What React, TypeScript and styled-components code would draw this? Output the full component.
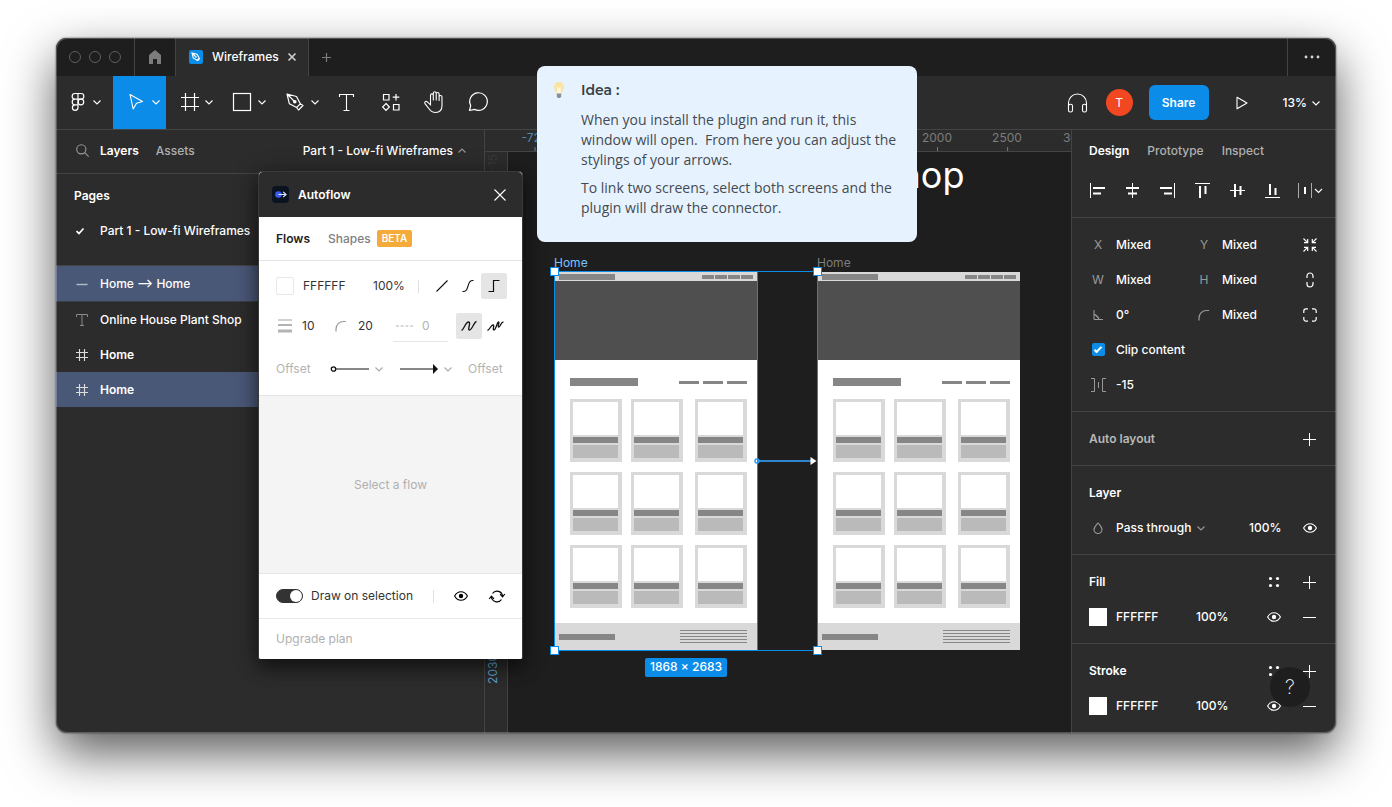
import React from "react";
import styled, { createGlobalStyle, css } from "styled-components";

const GlobalStyle = createGlobalStyle`
  *, *::before, *::after { box-sizing: border-box; }
  body { margin: 0; background: #fff; font-family: Inter, "Liberation Sans", sans-serif; font-size: 12px; line-height: 16px; }
  button, input, select { font: inherit; color: inherit; background: none; border: 0; padding: 0; margin: 0; }
  ul { list-style: none; margin: 0; padding: 0; }
  h1, h2, h3, p { margin: 0; font: inherit; }
`;

const panelBg = "#2c2c2c";
const darkBg = "#1e1e1e";
const line = "#444";
const blue = "#0c8ce9";

/* ---------- icons ---------- */

const Svg = styled.svg`
  display: block;
  flex: none;
  fill: none;
  stroke: currentColor;
  overflow: visible;
`;

type IconProps = { w?: number; h?: number; children: React.ReactNode };
const Icon = ({ w = 20, h = 20, children }: IconProps) => (
  <Svg width={w} height={h} viewBox={`0 0 ${w} ${h}`} aria-hidden="true">
    {children}
  </Svg>
);

const Chevron = ({ up }: { up?: boolean }) => (
  <Icon w={8} h={8}>
    <path d={up ? "M.5 5.500 4 2l3.500 3.500" : "M.5 2.500 4 6l3.500-3.500"} strokeWidth="1.1" />
  </Icon>
);
const HomeIcon = () => (
  <Icon w={14} h={16}>
    <path d="M7 1 1 6v9h4v-5h4v5h4V6Z" fill="currentColor" stroke="none" />
  </Icon>
);
const FileIcon = () => (
  <Icon w={14} h={14}>
    <rect width="14" height="14" rx="2" fill={blue} stroke="none" />
    <path d="m3 3 5 1.200 2.200 4-2 2-4-2.200ZM3 3l3.500 3.500M8.500 10.800l2.300-2.300" stroke="#fff" strokeWidth="1.100" />
    <circle cx="6.800" cy="6.800" r=".9" fill="#fff" stroke="none" />
  </Icon>
);
const CloseIcon = ({ s }: { s: number }) => (
  <Icon w={s} h={s}>
    <path d={`M.5.5 ${s - 0.5} ${s - 0.5}M${s - 0.5}.5.5 ${s - 0.5}`} strokeWidth={s < 10 ? 1.7 : 1.1} />
  </Icon>
);
const PlusIcon = () => (
  <Icon w={14} h={14}>
    <path d="M6.500 1v13M0 7.500h13" />
  </Icon>
);
const SmallPlusIcon = () => (
  <Icon w={9} h={9}>
    <path d="M4.500 0v9M0 4.500h9" strokeWidth="1.200" />
  </Icon>
);
const MinusIcon = () => (
  <Icon w={14} h={14}>
    <path d="M0 7.500h13" />
  </Icon>
);
const FigmaIcon = () => (
  <Icon>
    <path d="M10 1.500H7a2.800 2.800 0 0 0 0 5.700h3Zm0 0h3a2.800 2.800 0 0 1 0 5.700h-3M10 7.200H7a2.800 2.800 0 0 0 0 5.600h3ZM7 12.800a2.800 2.800 0 1 0 3 2.800v-2.800Z" strokeWidth="1.200" />
    <circle cx="12.900" cy="10" r="2.800" strokeWidth="1.200" />
  </Icon>
);
const MoveIcon = () => (
  <Icon>
    <path d="m3 2.500 12.500 7-6 1.700-3.300 5.800Z" strokeWidth="1.100" strokeLinejoin="round" />
  </Icon>
);
const FrameIcon = () => (
  <Icon>
    <path d="M5.500 1v18M14.500 1v18M1 5.500h18M1 14.500h18" strokeWidth="1.200" />
  </Icon>
);
const RectIcon = () => (
  <Icon>
    <rect x=".5" y="1.500" width="17" height="17" strokeWidth="1.200" />
  </Icon>
);
const PenIcon = () => (
  <Icon>
    <path d="m1 2 9.500 2.500 3.800 7.300-3.700 3.700-7.200-3.700ZM1 2l7 7M10.600 15.500l1.900 2.500 4.500-4.500-2.700-1.700" strokeWidth="1.200" strokeLinejoin="round" />
    <circle cx="8.800" cy="9.800" r="1.800" fill="currentColor" stroke="none" />
  </Icon>
);
const TextIcon = () => (
  <Icon>
    <path d="M2.500 5V2.500h14V5M9.500 2.500v16M6.500 18.500h6" strokeWidth="1.100" />
  </Icon>
);
const ResourcesIcon = () => (
  <Icon>
    <path d="M2.500 2.500H8V8H2.500ZM12.500 12.500H18V18h-5.500ZM5 11.500l3.400 3.500L5 18.500 1.600 15ZM15 2v6.500M11.700 5.200h6.600" strokeWidth="1.200" />
  </Icon>
);
const HandIcon = () => (
  <Icon w={20} h={22}>
    <path d="M5.500 11.500V4.300a1.400 1.400 0 0 1 2.800 0V9M8.300 9V2.200a1.400 1.400 0 0 1 2.900 0V9M11.200 9V3a1.400 1.400 0 0 1 2.900 0v6.500M14.100 6a1.400 1.400 0 0 1 2.900 0v8.500c0 4.500-2.700 7-6.500 7-3 0-4.700-1.300-6.300-3.500L0 12.600c-1-1.500.9-3 2.300-1.800l3.200 3V11" strokeWidth="1.100" strokeLinecap="round" />
  </Icon>
);
const CommentIcon = () => (
  <Icon>
    <path d="M.5 18.500 1.700 13.600A8.800 8.800 0 1 1 5.500 17.400Z" strokeWidth="1.200" strokeLinejoin="round" />
  </Icon>
);
const HeadphonesIcon = () => (
  <Icon w={21} h={20}>
    <path d="M1.500 13.500V10a9 9 0 0 1 18 0v3.500" strokeWidth="1.100" />
    <rect x="1.500" y="11.200" width="4" height="7.800" rx="1.800" strokeWidth="1.100" />
    <rect x="15.500" y="11.200" width="4" height="7.800" rx="1.800" strokeWidth="1.100" />
  </Icon>
);
const PlayIcon = () => (
  <Icon w={12} h={14}>
    <path d="M1 1.200 11 7 1 12.800Z" strokeWidth="1.100" strokeLinejoin="round" />
  </Icon>
);
const SearchIcon = () => (
  <Icon w={13} h={13}>
    <circle cx="5.300" cy="5.300" r="4.600" strokeWidth="1.100" />
    <path d="m8.700 8.700 4 4" strokeWidth="1.100" />
  </Icon>
);
const CheckIcon = () => (
  <Icon w={10} h={8}>
    <path d="M.5 4.200 3 6.500 7.500 1.500" strokeWidth="1.700" />
  </Icon>
);
const DashIcon = () => (
  <Icon w={12} h={12}>
    <path d="M.5 6.500h11" strokeWidth="1.400" />
  </Icon>
);
const SmallTextIcon = () => (
  <Icon w={12} h={12}>
    <path d="M.5 3V.5h11V3M6 .5v11M4 11.500h4" />
  </Icon>
);
const HashIcon = () => (
  <Icon w={12} h={12}>
    <path d="M3.500 0v12M8.500 0v12M0 3.500h12M0 8.500h12" strokeWidth="1.100" />
  </Icon>
);
const EyeIcon = () => (
  <Icon w={14} h={10}>
    <path d="M.6 5C2.200 2 4.400.7 7 .7S11.800 2 13.400 5C11.800 8 9.600 9.300 7 9.300S2.200 8 .6 5Z" strokeWidth="1.100" />
    <circle cx="7" cy="5" r="2.200" fill="currentColor" stroke="none" />
  </Icon>
);
const DotsIcon = () => (
  <Icon w={12} h={12}>
    <g fill="currentColor" stroke="none">
      <circle cx="2.500" cy="2.500" r="1.600" />
      <circle cx="9.500" cy="2.500" r="1.600" />
      <circle cx="2.500" cy="9.500" r="1.600" />
      <circle cx="9.500" cy="9.500" r="1.600" />
    </g>
  </Icon>
);
const MoreIcon = () => (
  <Icon w={16} h={4}>
    <g fill="#d5d5d5" stroke="none">
      <circle cx="2" cy="2" r="1.400" />
      <circle cx="8" cy="2" r="1.400" />
      <circle cx="14" cy="2" r="1.400" />
    </g>
  </Icon>
);
const CornerIcon = () => (
  <Icon w={12} h={12}>
    <path d="M1 11.500V9a7.500 7.500 0 0 1 7.500-7.500H11" strokeWidth="1.200" />
  </Icon>
);

const alignPaths: { name: string; thin: string; thick: string }[] = [
  { name: "Align left", thin: "M.5 0v15", thick: "M3 5h12M3 10.500h8" },
  { name: "Align horizontal centers", thin: "M7.500 0v15", thick: "M1 5h13M3 10.500h9" },
  { name: "Align right", thin: "M14.500 0v15", thick: "M0 5h12M4 10.500h8" },
  { name: "Align top", thin: "M0 .5h15", thick: "M5 3v12M10.500 3v8" },
  { name: "Align vertical centers", thin: "M0 7.500h15", thick: "M5 1v13M10.500 3v9" },
  { name: "Align bottom", thin: "M0 14.500h15", thick: "M5 1v11M10.500 5v7" },
];

/* ---------- window frame ---------- */

const AppWindow = styled.div`
  position: relative;
  display: flex;
  flex-direction: column;
  margin: 38px 56px 74px;
  min-width: 1100px;
  min-height: calc(100vh - 112px);
  color: #fff;
  background: ${panelBg};
  border-radius: 11px;
  box-shadow: 0 20px 50px rgba(0, 0, 0, 0.65), 0 0 2px rgba(0, 0, 0, 0.7);
  &::after {
    content: "";
    position: absolute;
    inset: 0;
    border-radius: inherit;
    box-shadow: inset 0 0 0 1px rgba(255, 255, 255, 0.24);
    pointer-events: none;
  }
`;
const Row = styled.div<{ $gap?: number }>`
  display: flex;
  align-items: center;
  gap: ${(p) => p.$gap ?? 0}px;
`;
const Spacer = styled.div`
  flex: 1;
`;
const TitleBar = styled.header`
  display: flex;
  height: 38px;
  background: ${darkBg};
  border-radius: 11px 11px 0 0;
`;
const Lights = styled(Row)`
  width: 79px;
  padding-left: 13px;
  border-right: 1px solid ${line};
`;
const Light = styled.span`
  width: 12px;
  height: 12px;
  border: 1px solid #5e5e5e;
  border-radius: 50%;
`;
const TitleButton = styled.button<{ $w: number }>`
  display: flex;
  align-items: center;
  justify-content: center;
  width: ${(p) => p.$w}px;
  color: #7c7c7c;
`;
const FileTab = styled.div`
  display: flex;
  align-items: center;
  gap: 9px;
  width: 134px;
  padding: 0 15px 0 13px;
  background: ${panelBg};
  border: solid ${line};
  border-width: 0 1px;
  font-weight: 500;
`;
const TabClose = styled.button`
  margin-left: auto;
  color: #ccc;
`;
const MoreButton = styled.button`
  display: flex;
  align-items: center;
  justify-content: center;
  width: 49px;
  border-left: 1px solid ${line};
`;

const Toolbar = styled.div`
  display: flex;
  height: 54px;
  border-bottom: 1px solid ${line};
`;
const Tool = styled.button<{ $active?: boolean; $single?: boolean }>`
  display: flex;
  align-items: center;
  justify-content: ${(p) => (p.$single ? "center" : "flex-start")};
  gap: 5px;
  width: ${(p) => (p.$single ? 44 : 53)}px;
  padding: ${(p) => (p.$single ? "0 0 1px" : "0 0 1px 14px")};
  background: ${(p) => (p.$active ? blue : "transparent")};
`;
const ToolGroup = styled(Row)`
  align-items: stretch;
  padding-left: 4px;
  & > :first-child { padding-left: 8px; }
`;
const ToolbarEnd = styled(Row)`
  margin-left: auto;
  padding-right: 16px;
`;
const Avatar = styled.span`
  display: grid;
  place-items: center;
  width: 27px;
  height: 27px;
  margin: 0 16px 0 19px;
  border-radius: 50%;
  background: #f24822;
`;
const ShareButton = styled.button`
  width: 60px;
  height: 35px;
  border-radius: 6px;
  background: ${blue};
  font-weight: 600;
`;
const PlayButton = styled.button`
  margin: 0 35px 0 27px;
`;
const ZoomButton = styled.button`
  display: flex;
  align-items: center;
  gap: 5px;
  font-weight: 500;
`;
const Body = styled.div`
  display: flex;
  flex: 1;
`;

/* ---------- layers panel ---------- */

const LayersPanel = styled.aside`
  flex: none;
  width: 429px;
  border-right: 1px solid ${line};
`;
const LayersHead = styled(Row)`
  height: 44px;
  padding: 0 18px 2px 17px;
  border-bottom: 1px solid ${line};
`;
const LayersTabs = styled(Row)`
  margin-left: 9px;
`;
const TabButton = styled.button<{ $active?: boolean; $light?: boolean }>`
  font-weight: ${(p) => (p.$active ? 600 : 500)};
  color: ${(p) => (p.$light ? (p.$active ? "#222" : "#808080") : p.$active ? "#fff" : "#b0b0b0")};
`;
const PagePicker = styled.button`
  display: flex;
  align-items: center;
  gap: 5px;
  margin-left: auto;
  font-weight: 500;
  svg { color: #999; }
`;
const Pages = styled.section`
  padding: 4px 0 17px;
  border-bottom: 1px solid ${line};
`;
const PagesTitle = styled.h2`
  padding-left: 18px;
  font-weight: 600;
  line-height: 35px;
`;
const LayerItem = styled.li<{ $selected?: boolean; $bold?: boolean; $last?: boolean; $tint?: string }>`
  display: flex;
  align-items: center;
  gap: 12px;
  height: ${(p) => (p.$last ? 36 : 35)}px;
  padding-left: 20px;
  font-weight: ${(p) => (p.$bold ? 600 : 500)};
  background: ${(p) => (p.$selected ? "#4a5878" : "transparent")};
  ${(p) => p.$last && css`border-bottom: 1px solid #3d3f46;`}
  svg { color: ${(p) => p.$tint ?? "#fff"}; }
`;
const IconSlot = styled.span`
  display: flex;
  width: 12px;
`;

/* ---------- canvas ---------- */

const CanvasColumn = styled.main`
  display: grid;
  flex: 1;
  grid-template: 22px 1fr / 23px 1fr;
  background: ${darkBg};
`;
const TopRuler = styled.div`
  grid-column: 1 / 3;
  position: relative;
  overflow: hidden;
  background: ${panelBg};
  border-bottom: 1px solid ${line};
`;
const SideRuler = styled.div`
  position: relative;
  background: ${panelBg};
  border-right: 1px solid ${line};
`;
const RulerMark = styled.span<{ $x: number; $tint?: string }>`
  position: absolute;
  left: ${(p) => p.$x}px;
  top: 0;
  bottom: 0;
  transform: translateX(-50%);
  color: ${(p) => p.$tint ?? "#7d7d7d"};
  &::after {
    content: "";
    position: absolute;
    left: 50%;
    bottom: 0;
    width: 1px;
    height: 4px;
    background: currentColor;
  }
`;
const SideMark = styled.span<{ $y: number; $tint: string }>`
  position: absolute;
  top: ${(p) => p.$y}px;
  left: 0;
  writing-mode: vertical-rl;
  transform: rotate(180deg);
  color: ${(p) => p.$tint};
`;
const Canvas = styled.div`
  position: relative;
  overflow: hidden;
`;
const Headline = styled.h1`
  position: absolute;
  left: 35px;
  top: 0;
  font-size: 36px;
  line-height: 46px;
  white-space: nowrap;
`;
const Artboard = styled.article<{ $x: number }>`
  position: absolute;
  left: ${(p) => p.$x}px;
  top: 120px;
  width: 203px;
  height: 378px;
  display: flex;
  flex-direction: column;
  background: #fff;
`;
const BoardName = styled.span<{ $active?: boolean }>`
  position: absolute;
  top: -17px;
  left: 0;
  color: ${(p) => (p.$active ? "#79c4ff" : "#7d7d7d")};
`;
const Bar = styled.span<{ $w: number; $h: number }>`
  width: ${(p) => p.$w}px;
  height: ${(p) => p.$h}px;
  background: #868686;
`;
const BoardNav = styled.div`
  display: flex;
  align-items: center;
  justify-content: space-between;
  height: 9px;
  padding: 0 4px 0 5px;
  background: #d9d9d9;
`;
const Hero = styled.div`
  height: 79px;
  background: #4f4f4f;
`;
const BoardTitle = styled.div`
  display: flex;
  align-items: center;
  justify-content: space-between;
  margin: 18px 10px 13px 16px;
`;
const Cards = styled.div`
  display: grid;
  grid-template-columns: 61px 64px 52px;
  row-gap: 10px;
  margin-left: 16px;
`;
const Card = styled.div`
  display: flex;
  flex-direction: column;
  gap: 2px;
  width: 52px;
  height: 63px;
  padding: 3px 4px 4px 3px;
  background: #d9d9d9;
`;
const CardImage = styled.div`
  height: 33px;
  background: #fff;
`;
const CardBar = styled.div`
  height: 6px;
  background: #868686;
`;
const CardText = styled.div`
  flex: 1;
  background: #bababa;
`;
const BoardFooter = styled.div`
  display: flex;
  align-items: center;
  justify-content: space-between;
  height: 27px;
  margin-top: auto;
  padding: 0 10px 0 5px;
  background: #d9d9d9;
`;
const Stack = styled.div`
  display: flex;
  flex-direction: column;
  gap: 2px;
`;
const Selection = styled.div<{ $w: number }>`
  position: absolute;
  left: 46px;
  top: 119px;
  width: ${(p) => p.$w}px;
  height: 380px;
  border: 1px solid ${blue};
`;
const Handle = styled.span<{ $x: "left" | "right"; $y: "top" | "bottom" }>`
  position: absolute;
  ${(p) => p.$x}: -5px;
  ${(p) => p.$y}: -5px;
  width: 9px;
  height: 9px;
  background: #fff;
  border: 1px solid ${blue};
`;
const Connector = styled.div`
  position: absolute;
  left: 245px;
  top: 304px;
`;
const SizeBadge = styled.span`
  position: absolute;
  left: 137px;
  top: 506px;
  padding: 1px 5px 2px;
  border-radius: 2px;
  background: ${blue};
  font-weight: 500;
  white-space: nowrap;
`;

/* ---------- design panel ---------- */

const DesignPanel = styled.aside`
  flex: none;
  width: 265px;
  border-left: 1px solid ${line};
`;
const DesignTabs = styled(Row)`
  height: 41px;
  padding-left: 17px;
`;
const AlignRow = styled.div`
  display: flex;
  align-items: center;
  gap: 20px;
  height: 47px;
  padding: 0 0 8px 18px;
  border-bottom: 1px solid ${line};
`;
const Section = styled.section`
  padding: 9px 16px 9px 17px;
  border-bottom: 1px solid ${line};
  font-weight: 500;
  &:last-of-type { border-bottom: 0; }
`;
const FieldGrid = styled.div`
  display: grid;
  grid-template-columns: 18px 70px 18px 1fr 20px;
  grid-auto-rows: 35px;
  column-gap: 9px;
  align-items: center;
`;
const FieldLabel = styled.label`
  display: grid;
  place-items: center;
  color: #9a9a9a;
  font-weight: 400;
`;
const Field = styled.input<{ $w?: number; $faint?: boolean }>`
  width: ${(p) => (p.$w ? `${p.$w}px` : "100%")};
  min-width: 0;
  height: 16px;
  outline: none;
  ${(p) => p.$faint && css`color: #b3b3b3;`}
  &::placeholder { color: #b3b3b3; opacity: 1; }
`;
const IconButton = styled.button<{ $w?: number }>`
  display: grid;
  place-items: center;
  width: ${(p) => p.$w ?? 20}px;
  height: 20px;
`;
const SectionRow = styled.div`
  display: flex;
  align-items: center;
  height: 35px;
`;
const SectionTitle = styled.h3<{ $dim?: boolean }>`
  flex: 1;
  font-weight: 600;
  color: ${(p) => (p.$dim ? "#b8b8b8" : "#fff")};
`;
const ClipLabel = styled.label`
  grid-column: 2 / 6;
`;
const CheckBox = styled.input`
  appearance: none;
  justify-self: center;
  display: grid;
  place-items: center;
  width: 13px;
  height: 13px;
  border-radius: 2px;
  background: ${blue};
  &:checked::after {
    content: "";
    width: 8px;
    height: 4px;
    border: solid #fff;
    border-width: 0 0 2px 2px;
    transform: translateY(-1px) rotate(-45deg);
  }
`;
const Swatch = styled.button<{ $pale?: boolean }>`
  width: 18px;
  height: 18px;
  margin-right: 9px;
  background: #fff;
  border: 1px solid ${(p) => (p.$pale ? "#e8e8e8" : "#fff")};
  border-radius: ${(p) => (p.$pale ? 2 : 0)}px;
`;
const BlendSelect = styled.select`
  appearance: none;
  width: 76px;
  margin-left: 9px;
`;
const ColorValue = styled(Field)`
  margin-right: auto;
`;
const Percent = styled(Field)`
  margin-right: 19px;
`;
const FarPercent = styled(Field)`
  margin-right: 34px;
`;
const Gap = styled(Row)`
  gap: 16px;
`;
const Dim = styled.span`
  display: grid;
  place-items: center;
  width: 18px;
  color: #9a9a9a;
`;
const HelpButton = styled.button`
  position: absolute;
  right: 26px;
  bottom: 26px;
  width: 40px;
  height: 40px;
  border-radius: 50%;
  background: ${darkBg};
  font-size: 20px;
  font-weight: 200;
`;

/* ---------- plugin window ---------- */

const Plugin = styled.section`
  position: absolute;
  left: 202px;
  top: 133px;
  width: 265px;
  color: #333;
  background: #fff;
  border: 1px solid #3a3a3a;
  border-width: 1px 1px 0;
  border-radius: 4px 4px 2px 2px;
  box-shadow: 0 4px 24px rgba(0, 0, 0, 0.4), 0 10px 16px rgba(0, 0, 0, 0.35);
`;
const PluginHead = styled(Row)`
  height: 45px;
  padding: 0 16px 0 13px;
  color: #fff;
  background: ${panelBg};
  border-radius: 4px 4px 0 0;
  font-weight: 600;
`;
const PluginTabs = styled(Row)`
  height: 44px;
  padding: 0 17px;
  border-bottom: 1px solid #e5e5e5;
`;
const Beta = styled.span`
  margin-left: 6px;
  padding: 0 5px;
  border-radius: 2px;
  background: #f5ab3a;
  color: #fff;
  font-size: 10px;
  font-weight: 600;
  line-height: 17px;
`;
const Controls = styled.div`
  padding: 5px 14px 3px 17px;
  border-bottom: 1px solid #e5e5e5;
`;
const ControlRow = styled.div<{ $tall?: boolean }>`
  display: flex;
  align-items: center;
  height: ${(p) => (p.$tall ? 46 : 40)}px;
`;
const VLine = styled.span<{ $l: number; $r: number }>`
  width: 1px;
  height: 13px;
  margin: 0 ${(p) => p.$r}px 0 ${(p) => p.$l}px;
  background: #e0e0e0;
`;
const StyleButton = styled.button<{ $active?: boolean }>`
  display: grid;
  place-items: center;
  width: 26px;
  height: 26px;
  border-radius: 2px;
  color: #111;
  background: ${(p) => (p.$active ? "#e5e5e5" : "transparent")};
`;
const DashField = styled.label`
  display: flex;
  align-items: center;
  gap: 9px;
  width: 55px;
  height: 32px;
  margin: 0 8px 0 auto;
  padding-left: 3px;
  border-bottom: 1px solid #e5e5e5;
  color: #b3b3b3;
`;
const CapButton = styled.button`
  display: flex;
  align-items: center;
  gap: 6px;
  color: #111;
  svg:last-child { color: #aaa; }
`;
const FlowArea = styled.div`
  display: grid;
  place-items: center;
  height: 178px;
  background: #f4f4f4;
  border-bottom: 1px solid #e5e5e5;
  color: #b0b0b0;
`;
const DrawRow = styled(Row)`
  height: 45px;
  padding: 0 15px 0 17px;
  border-bottom: 1px solid #e8e8e8;
`;
const Toggle = styled.input`
  appearance: none;
  width: 27px;
  height: 14px;
  margin-right: 8px;
  border: 1px solid #333;
  border-radius: 7px;
  background: #333;
  &::after {
    content: "";
    display: block;
    width: 12px;
    height: 12px;
    margin-left: 13px;
    border-radius: 50%;
    background: #fff;
  }
`;
const BlackIcon = styled(IconButton)`
  color: #000;
`;
const Upgrade = styled.a`
  display: block;
  padding: 0 17px;
  line-height: 40px;
  color: #b0b0b0;
  text-decoration: none;
`;

/* ---------- idea note ---------- */

const Idea = styled.aside`
  position: absolute;
  left: 481px;
  top: 28px;
  display: flex;
  gap: 16px;
  width: 380px;
  min-height: 176px;
  padding: 14px 14px 14px 16px;
  border-radius: 8px;
  background: #e6f3ff;
  color: #454a50;
  font: 14px/20px "Open Sans", "Noto Sans", sans-serif;
`;
const IdeaTitle = styled.h2`
  margin-bottom: 10px;
  font: 600 14px/20px Montserrat, Inter, sans-serif;
  color: #3a3f45;
`;
const IdeaText = styled.p`
  margin-bottom: 8px;
  white-space: pre-wrap;
`;

const Board = ({ x, active }: { x: number; active?: boolean }) => (
  <Artboard $x={x}>
    <BoardName $active={active}>Home</BoardName>
    <BoardNav>
      <Bar $w={56} $h={6} />
      <Row $gap={1}>
        {[0, 1, 2, 3].map((i) => (
          <Bar key={i} $w={12} $h={4} />
        ))}
      </Row>
    </BoardNav>
    <Hero />
    <BoardTitle>
      <Bar $w={68} $h={8} />
      <Row $gap={4}>
        {[0, 1, 2].map((i) => (
          <Bar key={i} $w={20} $h={3} />
        ))}
      </Row>
    </BoardTitle>
    <Cards>
      {Array.from({ length: 9 }, (_, i) => (
        <Card key={i}>
          <CardImage />
          <CardBar />
          <CardText />
        </Card>
      ))}
    </Cards>
    <BoardFooter>
      <Bar $w={56} $h={6} />
      <Stack>
        {[0, 1, 2, 3, 4].map((i) => (
          <Bar key={i} $w={67} $h={1} />
        ))}
      </Stack>
    </BoardFooter>
  </Artboard>
);

const PaintSection = ({ title }: { title: string }) => (
  <Section>
    <SectionRow>
      <SectionTitle>{title}</SectionTitle>
      <Gap>
        <IconButton aria-label={`${title} styles`}><DotsIcon /></IconButton>
        <IconButton aria-label={`Add ${title}`}><PlusIcon /></IconButton>
      </Gap>
    </SectionRow>
    <SectionRow>
      <Swatch aria-label={`${title} color`} />
      <ColorValue $w={60} aria-label={`${title} hex`} defaultValue="FFFFFF" />
      <FarPercent $w={34} aria-label={`${title} opacity`} defaultValue="100%" />
      <Gap>
        <IconButton aria-label={`Hide ${title}`}><EyeIcon /></IconButton>
        <IconButton aria-label={`Remove ${title}`}><MinusIcon /></IconButton>
      </Gap>
    </SectionRow>
  </Section>
);

export default function App() {
  return (
    <>
      <GlobalStyle />
      <AppWindow>
        <TitleBar>
          <Lights $gap={8}><Light /><Light /><Light /></Lights>
          <TitleButton $w={40} aria-label="Home"><HomeIcon /></TitleButton>
          <FileTab>
            <FileIcon />
            Wireframes
            <TabClose aria-label="Close tab"><CloseIcon s={8} /></TabClose>
          </FileTab>
          <TitleButton $w={34} aria-label="New tab"><SmallPlusIcon /></TitleButton>
          <Spacer />
          <MoreButton aria-label="More"><MoreIcon /></MoreButton>
        </TitleBar>

        <Toolbar>
          <ToolGroup>
            <Tool aria-label="Main menu"><FigmaIcon /><Chevron /></Tool>
            <Tool $active aria-label="Move"><MoveIcon /><Chevron /></Tool>
            <Tool aria-label="Frame"><FrameIcon /><Chevron /></Tool>
            <Tool aria-label="Shape"><RectIcon /><Chevron /></Tool>
            <Tool aria-label="Pen"><PenIcon /><Chevron /></Tool>
            <Tool $single aria-label="Text"><TextIcon /></Tool>
            <Tool $single aria-label="Resources"><ResourcesIcon /></Tool>
            <Tool $single aria-label="Hand"><HandIcon /></Tool>
            <Tool $single aria-label="Comment"><CommentIcon /></Tool>
          </ToolGroup>
          <ToolbarEnd>
            <IconButton aria-label="Audio"><HeadphonesIcon /></IconButton>
            <Avatar>T</Avatar>
            <ShareButton>Share</ShareButton>
            <PlayButton aria-label="Present"><PlayIcon /></PlayButton>
            <ZoomButton>13% <Chevron /></ZoomButton>
          </ToolbarEnd>
        </Toolbar>

        <Body>
          <LayersPanel>
            <LayersHead>
              <Dim><SearchIcon /></Dim>
              <LayersTabs $gap={17}>
                <TabButton $active>Layers</TabButton>
                <TabButton>Assets</TabButton>
              </LayersTabs>
              <PagePicker>Part 1 - Low-fi Wireframes <Chevron up /></PagePicker>
            </LayersHead>
            <Pages>
              <PagesTitle>Pages</PagesTitle>
              <ul>
                <LayerItem><IconSlot><CheckIcon /></IconSlot>Part 1 - Low-fi Wireframes</LayerItem>
              </ul>
            </Pages>
            <ul>
              <LayerItem $selected $last $tint="#b4bccb"><DashIcon />Home ⟶ Home</LayerItem>
              <LayerItem $tint="#8a8a8a"><SmallTextIcon />Online House Plant Shop</LayerItem>
              <LayerItem $bold $tint="#ddd"><HashIcon />Home</LayerItem>
              <LayerItem $bold $selected $tint="#ddd"><HashIcon />Home</LayerItem>
            </ul>
          </LayersPanel>

          <CanvasColumn>
            <TopRuler>
              <RulerMark $x={50} $tint="#4f87ad">-720</RulerMark>
              <RulerMark $x={452}>2000</RulerMark>
              <RulerMark $x={522}>2500</RulerMark>
              <RulerMark $x={593}>3000</RulerMark>
            </TopRuler>
            <SideRuler>
              <SideMark $y={2} $tint="#3a3a3a">-15</SideMark>
              <SideMark $y={502} $tint="#5fa5d4">2030</SideMark>
            </SideRuler>
            <Canvas>
              <Headline>Online House Plant Shop</Headline>
              <Board x={46} active />
              <Board x={309} />
              <Selection $w={204} />
              <Connector>
                <Icon w={66} h={10}>
                  <path d="M4 5h58" stroke="#2f86cf" strokeWidth="2" />
                  <circle cx="4" cy="5" r="2" stroke="#2f9bf0" strokeWidth="1.500" />
                  <path d="m57.500 1 6 4-6 4Z" fill="#fff" stroke="none" />
                </Icon>
              </Connector>
              <Selection $w={264}>
                <Handle $x="left" $y="top" />
                <Handle $x="right" $y="top" />
                <Handle $x="left" $y="bottom" />
                <Handle $x="right" $y="bottom" />
              </Selection>
              <SizeBadge>1868 × 2683</SizeBadge>
            </Canvas>
          </CanvasColumn>

          <DesignPanel>
            <DesignTabs $gap={18}>
              <TabButton $active>Design</TabButton>
              <TabButton>Prototype</TabButton>
              <TabButton>Inspect</TabButton>
            </DesignTabs>
            <AlignRow>
              {alignPaths.map((a) => (
                <button key={a.name} aria-label={a.name}>
                  <Icon w={15} h={15}>
                    <path d={a.thin} />
                    <path d={a.thick} strokeWidth="2" />
                  </Icon>
                </button>
              ))}
              <button aria-label="Distribute">
                <Icon w={20} h={15}>
                  <path d="M-1.500 0v15M11.500 0v15" stroke="#aaa" />
                  <path d="M5 4v7" strokeWidth="2" />
                  <path d="m15 6 3.500 3.500L22 6" strokeWidth="1.100" />
                </Icon>
              </button>
            </AlignRow>
            <Section>
              <FieldGrid>
                <FieldLabel htmlFor="x">X</FieldLabel>
                <Field id="x" defaultValue="Mixed" />
                <FieldLabel htmlFor="y">Y</FieldLabel>
                <Field id="y" defaultValue="Mixed" />
                <IconButton aria-label="Resize to fit">
                  <Icon w={14} h={14}>
                    <path d="M.5.5l3.800 3.800M1 4.700h3.700V1M13.500.5 9.700 4.300M13 4.700H9.300V1M.5 13.500l3.800-3.800M1 9.300h3.700V13M13.500 13.500 9.700 9.700M13 9.300H9.300V13" strokeWidth="1.200" />
                  </Icon>
                </IconButton>
                <FieldLabel htmlFor="w">W</FieldLabel>
                <Field id="w" defaultValue="Mixed" />
                <FieldLabel htmlFor="h">H</FieldLabel>
                <Field id="h" defaultValue="Mixed" />
                <IconButton aria-label="Constrain proportions">
                  <Icon w={8} h={16}>
                    <path d="M1 6V4a3 3 0 0 1 6 0v2M1 10v2a3 3 0 0 0 6 0v-2" strokeWidth="1.200" />
                  </Icon>
                </IconButton>
                <FieldLabel htmlFor="rotation">
                  <Icon w={10} h={10}><path d="M1 0v9.500h9M1 4.500a5 5 0 0 1 5 5M1 4l5 5" /></Icon>
                </FieldLabel>
                <Field id="rotation" defaultValue="0°" />
                <FieldLabel htmlFor="radius"><CornerIcon /></FieldLabel>
                <Field id="radius" defaultValue="Mixed" />
                <IconButton aria-label="Independent corners">
                  <Icon w={14} h={14}>
                    <path d="M.8 5V3A2.200 2.200 0 0 1 3 .8h2M9 .8h2A2.200 2.200 0 0 1 13.200 3v2M13.200 9v2a2.200 2.200 0 0 1-2.200 2.200H9M5 13.200H3A2.200 2.200 0 0 1 .8 11V9" strokeWidth="1.200" />
                  </Icon>
                </IconButton>
                <CheckBox type="checkbox" id="clip" defaultChecked />
                <ClipLabel htmlFor="clip">Clip content</ClipLabel>
                <FieldLabel htmlFor="spacing">
                  <Icon w={15} h={14}><path d="M0 .5h3.500v13H0M15 .5h-3.500v13H15M7.500 4v6" /></Icon>
                </FieldLabel>
                <Field id="spacing" defaultValue="-15" />
              </FieldGrid>
            </Section>
            <Section>
              <SectionRow>
                <SectionTitle $dim>Auto layout</SectionTitle>
                <IconButton aria-label="Add auto layout"><PlusIcon /></IconButton>
              </SectionRow>
            </Section>
            <Section>
              <SectionRow><SectionTitle>Layer</SectionTitle></SectionRow>
              <SectionRow>
                <Dim>
                  <Icon w={10} h={12}><path d="M5 1C3 3.400 1 5.200 1 7.500a4 4 0 0 0 8 0C9 5.200 7 3.400 5 1Z" strokeWidth="1.100" /></Icon>
                </Dim>
                <BlendSelect aria-label="Blend mode"><option>Pass through</option></BlendSelect>
                <Dim><Chevron /></Dim>
                <Spacer />
                <Percent $w={32} aria-label="Layer opacity" defaultValue="100%" />
                <IconButton aria-label="Hide layer"><EyeIcon /></IconButton>
              </SectionRow>
            </Section>
            <PaintSection title="Fill" />
            <PaintSection title="Stroke" />
          </DesignPanel>
        </Body>

        <HelpButton aria-label="Help">?</HelpButton>

        <Plugin>
          <PluginHead $gap={9}>
            <Icon w={17} h={17}>
              <rect width="17" height="17" rx="4" fill="#0b1220" stroke="none" />
              <circle cx="6.500" cy="8.500" r="3.300" fill="#3b5bf5" stroke="none" />
              <path d="M6.500 8.500h7.500M11.200 5.900l2.800 2.600-2.800 2.600" stroke="#dfe6ff" strokeWidth="1.200" />
            </Icon>
            Autoflow
            <Spacer />
            <button aria-label="Close Autoflow"><CloseIcon s={12} /></button>
          </PluginHead>
          <PluginTabs>
            <Row $gap={18}>
              <TabButton $light $active>Flows</TabButton>
              <TabButton $light>Shapes</TabButton>
            </Row>
            <Beta>BETA</Beta>
          </PluginTabs>
          <Controls>
            <ControlRow>
              <Swatch $pale aria-label="Flow color" />
              <Field $w={70} aria-label="Flow hex" defaultValue="FFFFFF" />
              <Field $w={34} aria-label="Flow opacity" defaultValue="100%" />
              <VLine $l={11} $r={10} />
              <StyleButton aria-label="Straight"><Icon w={12} h={12}><path d="M.5 11.500l11-11" strokeWidth="1.100" /></Icon></StyleButton>
              <StyleButton aria-label="Curved"><Icon w={12} h={12}><path d="M.5 11.500h1c3.500 0 3.500-3 4.500-5.500S7 .5 10.500.5h1" strokeWidth="1.100" /></Icon></StyleButton>
              <StyleButton $active aria-label="Elbow"><Icon w={12} h={12}><path d="M.5 11.500h5V.5h6" strokeWidth="1.200" /></Icon></StyleButton>
            </ControlRow>
            <ControlRow>
              <Dim>
                <Icon w={14} h={14}>
                  <g stroke="#b3b3b3">
                    <path d="M0 1h14" strokeWidth="2" opacity=".6" />
                    <path d="M0 6h14" strokeWidth="2" />
                    <path d="M0 12h14" strokeWidth="3" />
                  </g>
                </Icon>
              </Dim>
              <Row $gap={8}>
                <span />
                <Field $w={22} aria-label="Thickness" defaultValue="10" />
                <Dim as="label" htmlFor="flow-radius"><CornerIcon /></Dim>
                <Field id="flow-radius" $w={20} aria-label="Radius" defaultValue="20" />
              </Row>
              <DashField>
                <Icon w={17} h={2}><path d="M0 1h17" strokeDasharray="3 1.700" /></Icon>
                <Field $w={12} aria-label="Dash" defaultValue="0" />
              </DashField>
              <StyleButton $active aria-label="Smooth"><Icon w={16} h={10}><path d="M.5 9.500C3 8.500 4.500 1 7.500 1s-1.500 8 1 8 4.500-8 7-8.500" strokeWidth="1.300" /></Icon></StyleButton>
              <StyleButton aria-label="Sketchy"><Icon w={17} h={10}><path d="M.5 9.500C2.500 9 4 4 6 4s-1 5 1 5 3-8 4.500-8-1.500 5 .3 5S13.500 1 16.500.8" strokeWidth="1.300" /></Icon></StyleButton>
            </ControlRow>
            <ControlRow $tall>
              <Field $w={54} $faint aria-label="Start offset" placeholder="Offset" />
              <CapButton aria-label="Start cap">
                <Icon w={39} h={10}><circle cx="3.500" cy="5" r="2.200" strokeWidth="1.300" /><path d="M6 5h33" strokeWidth="1.200" /></Icon>
                <Chevron />
              </CapButton>
              <Spacer />
              <CapButton aria-label="End cap">
                <Icon w={38} h={10}><path d="M0 5h33" strokeWidth="1.200" /><path d="M33 0l5 5-5 5Z" fill="currentColor" stroke="none" /></Icon>
                <Chevron />
              </CapButton>
              <Spacer />
              <Field $w={40} $faint aria-label="End offset" placeholder="Offset" />
            </ControlRow>
          </Controls>
          <FlowArea>Select a flow</FlowArea>
          <DrawRow>
            <Toggle type="checkbox" id="draw" defaultChecked />
            <label htmlFor="draw">Draw on selection</label>
            <Spacer />
            <VLine $l={0} $r={17} />
            <Gap>
              <BlackIcon aria-label="Preview"><EyeIcon /></BlackIcon>
              <BlackIcon aria-label="Refresh">
                <Icon w={16} h={13}>
                  <path d="M3.500 3.500a5.500 5.500 0 0 1 10 3M12.500 9.500a5.500 5.500 0 0 1-10-3" strokeWidth="1.200" />
                  <path d="M11 4.200l2.600 2.600 2.200-2.800M5 8.800 2.400 6.200.2 9" strokeWidth="1.200" />
                </Icon>
              </BlackIcon>
            </Gap>
          </DrawRow>
          <Upgrade href="#upgrade">Upgrade plan</Upgrade>
        </Plugin>

        <Idea>
          <Icon w={12} h={20}>
            <g stroke="none">
              <path d="M6 2a5 5 0 0 0-5 5c0 2.800 2 3.800 2.500 6.500h5C9 10.800 11 9.800 11 7a5 5 0 0 0-5-5Z" fill="#fbe3a0" />
              <path d="M4.300 6.500 6 8l1.700-1.500v7H4.300Z" fill="#fff8e0" />
              <path d="M3.800 13.500h4.400v3L7 18H5l-1.200-1.500Z" fill="#8b8f94" />
            </g>
          </Icon>
          <div>
            <IdeaTitle>Idea :</IdeaTitle>
            <IdeaText>When you install the plugin and run it, this window will open.  From here you can adjust the stylings of your arrows.</IdeaText>
            <IdeaText>To link two screens, select both screens and the plugin will draw the connector.</IdeaText>
          </div>
        </Idea>
      </AppWindow>
    </>
  );
}
